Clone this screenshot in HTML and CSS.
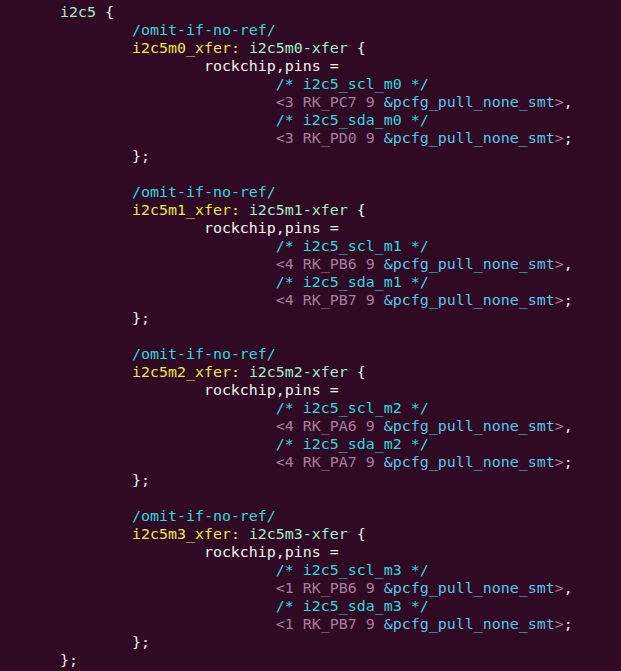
FILE: index.html
```html
<!DOCTYPE html>
<html>
<head>
<meta charset="utf-8">
<link rel="stylesheet" href="styles.css">
</head>
<body>
<pre class="code"><span class="n">i2c5</span> {
	<span class="c">/omit-if-no-ref/</span>
	<span class="l">i2c5m0_xfer:</span> <span class="n">i2c5m0-xfer</span> {
		rockchip,pins =
			<span class="c">/* i2c5_scl_m0 */</span>
			<span class="m">&lt;3 RK_PC7 9 </span><span class="r">&amp;pcfg_pull_none_smt</span><span class="m">&gt;</span>,
			<span class="c">/* i2c5_sda_m0 */</span>
			<span class="m">&lt;3 RK_PD0 9 </span><span class="r">&amp;pcfg_pull_none_smt</span><span class="m">&gt;</span>;
	};

	<span class="c">/omit-if-no-ref/</span>
	<span class="l">i2c5m1_xfer:</span> <span class="n">i2c5m1-xfer</span> {
		rockchip,pins =
			<span class="c">/* i2c5_scl_m1 */</span>
			<span class="m">&lt;4 RK_PB6 9 </span><span class="r">&amp;pcfg_pull_none_smt</span><span class="m">&gt;</span>,
			<span class="c">/* i2c5_sda_m1 */</span>
			<span class="m">&lt;4 RK_PB7 9 </span><span class="r">&amp;pcfg_pull_none_smt</span><span class="m">&gt;</span>;
	};

	<span class="c">/omit-if-no-ref/</span>
	<span class="l">i2c5m2_xfer:</span> <span class="n">i2c5m2-xfer</span> {
		rockchip,pins =
			<span class="c">/* i2c5_scl_m2 */</span>
			<span class="m">&lt;4 RK_PA6 9 </span><span class="r">&amp;pcfg_pull_none_smt</span><span class="m">&gt;</span>,
			<span class="c">/* i2c5_sda_m2 */</span>
			<span class="m">&lt;4 RK_PA7 9 </span><span class="r">&amp;pcfg_pull_none_smt</span><span class="m">&gt;</span>;
	};

	<span class="c">/omit-if-no-ref/</span>
	<span class="l">i2c5m3_xfer:</span> <span class="n">i2c5m3-xfer</span> {
		rockchip,pins =
			<span class="c">/* i2c5_scl_m3 */</span>
			<span class="m">&lt;1 RK_PB6 9 </span><span class="r">&amp;pcfg_pull_none_smt</span><span class="m">&gt;</span>,
			<span class="c">/* i2c5_sda_m3 */</span>
			<span class="m">&lt;1 RK_PB7 9 </span><span class="r">&amp;pcfg_pull_none_smt</span><span class="m">&gt;</span>;
	};
};</pre>
</body>
</html>
```
FILE: styles.css
```css
html, body {
  margin: 0;
  padding: 0;
  background: #300a24;
  height: 100%;
  overflow: hidden;
}
.code {
  margin: 0;
  padding: 3px 0 0 60px;
  font-family: "DejaVu Sans Mono", monospace;
  font-size: 14.95px;
  line-height: 18px;
  tab-size: 8;
  -moz-tab-size: 8;
  color: #f2f2ee;
  white-space: pre;
}
.n { color: #a6eccb; }
.c { color: #34d6dc; }
.l { color: #ece64e; }
.m { color: #a77b9f; }
.r { color: #58c6e6; }
```
